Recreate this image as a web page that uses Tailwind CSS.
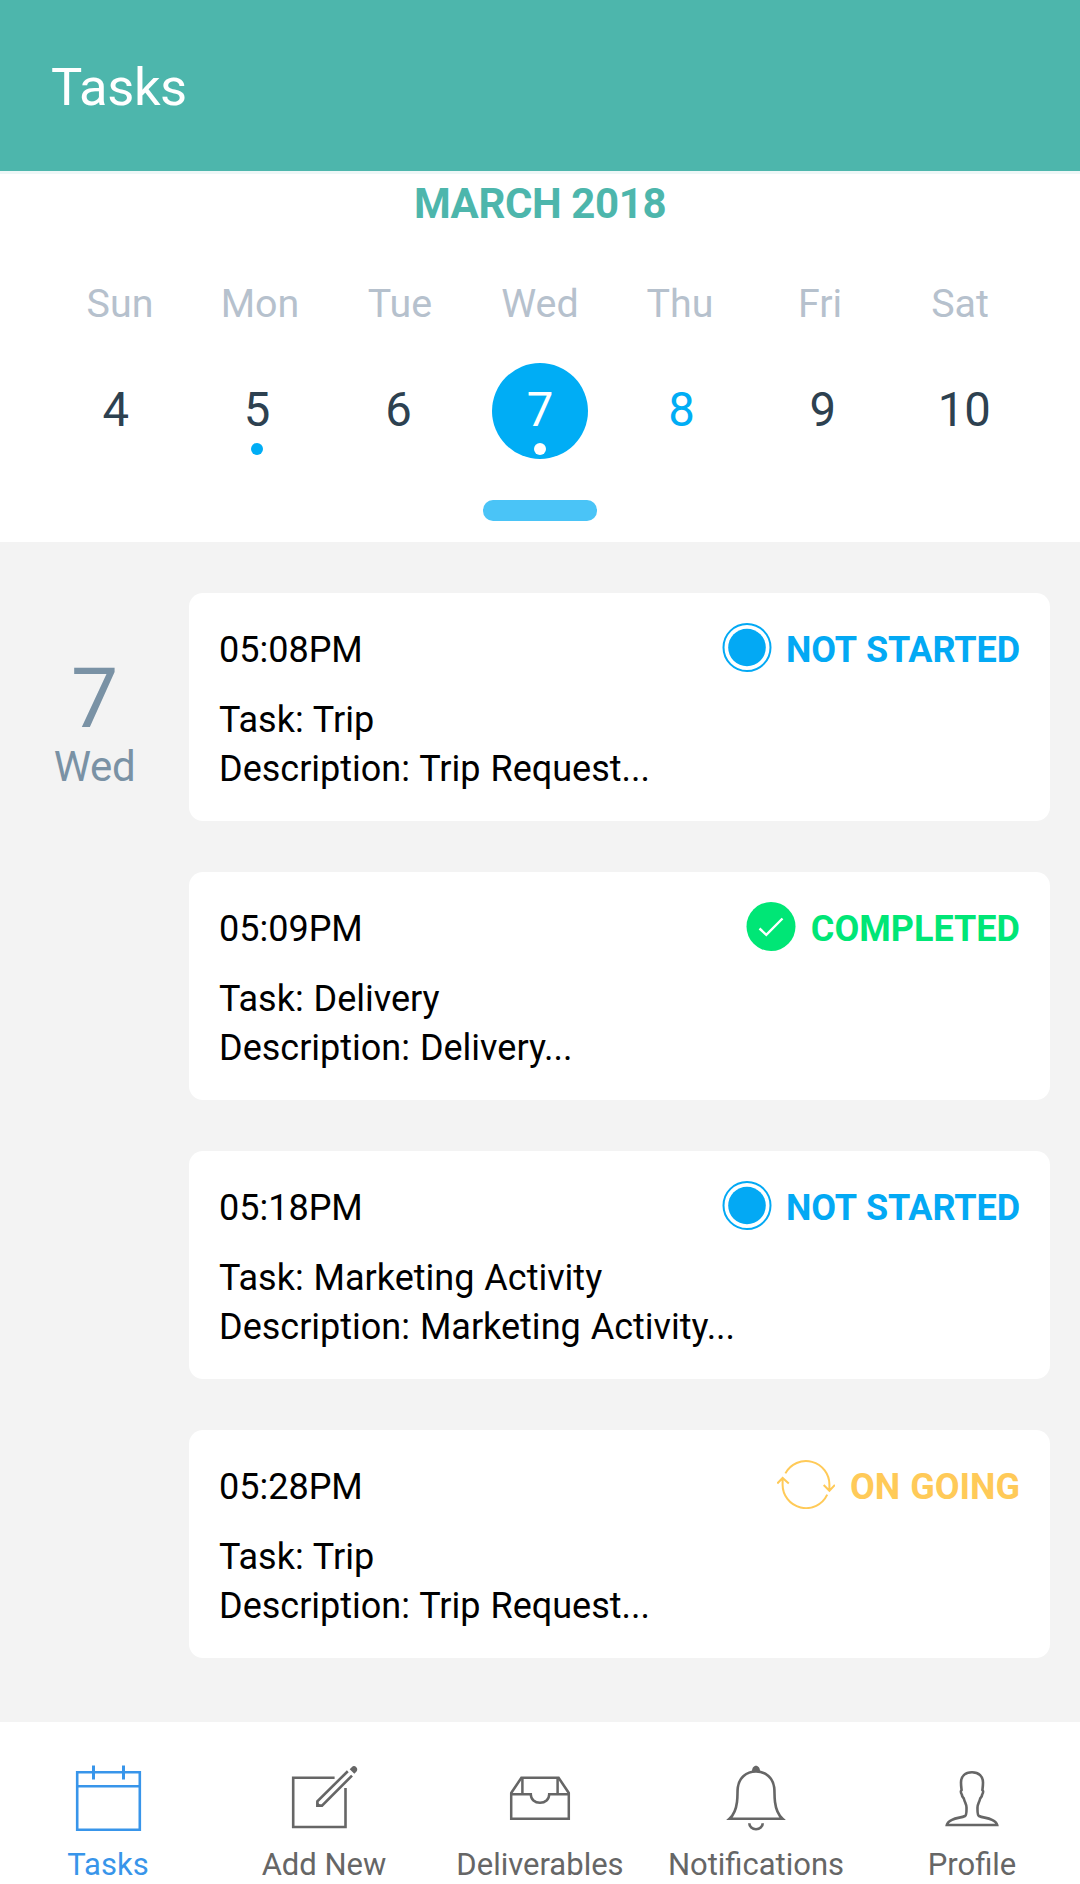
<!DOCTYPE html>
<html lang="en">
<head>
    <meta charset="UTF-8">
    <meta name="viewport" content="width=device-width, initial-scale=1.0">
    <title>Tasks</title>
    <script src="https://cdn.jsdelivr.net/npm/@tailwindcss/browser@4"></script>
</head>
<body class="bg-[#f3f3f3] font-['Roboto',sans-serif] w-[1080px] h-[1884px] flex flex-col overflow-hidden">
    <header class="bg-[#4db6ac] h-[171px] shrink-0 pt-[52px] pl-[51px]">
        <h1 class="text-white text-[52.5px] leading-[70px] tracking-[-0.4px]">Tasks</h1>
    </header>

    <!-- Week calendar -->
    <section class="bg-white h-[371px] shrink-0 border-t-3 border-[#eef7f7] flex flex-col">
        <h2 class="mt-[6px] text-center text-[#4db6ac] font-bold text-[42px] leading-[48px] tracking-[-0.4px]">MARCH 2018</h2>
        <div class="mt-[52px] mx-[50px] grid grid-cols-7 text-center text-[#b6c1cd] text-[39.4px] leading-[48px]">
            <span>Sun</span>
            <span>Mon</span>
            <span>Tue</span>
            <span>Wed</span>
            <span>Thu</span>
            <span>Fri</span>
            <span>Sat</span>
        </div>
        <div class="mt-[35px] mx-[45px] grid grid-cols-7 justify-items-center text-[#2d4150] text-[47.25px] leading-[48px]">
            <div class="size-24 pt-[23px] flex flex-col items-center">4</div>
            <div class="size-24 pt-[23px] flex flex-col items-center">5<span class="size-3 mt-[9px] rounded-full bg-[#00adf5]"></span></div>
            <div class="size-24 pt-[23px] flex flex-col items-center">6</div>
            <div class="size-24 pt-[23px] flex flex-col items-center rounded-full bg-[#00adf5] text-white">7<span class="size-3 mt-[9px] rounded-full bg-white"></span></div>
            <div class="size-24 pt-[23px] flex flex-col items-center text-[#00adf5]">8</div>
            <div class="size-24 pt-[23px] flex flex-col items-center">9</div>
            <div class="size-24 pt-[23px] flex flex-col items-center">10</div>
        </div>
        <div class="mt-[41px] mx-auto w-[114px] h-[21px] rounded-[10px] bg-[#4ac4f7]"></div>
    </section>

    <!-- Agenda -->
    <main class="flex h-[1180px] shrink-0 pt-[51px] pr-[30px]">
        <div class="w-[189px] pt-[61px] text-center text-[#7a92a5]">
            <div class="text-[84px] leading-[90px]">7</div>
            <div class="text-[42px] leading-[45px] tracking-[-0.3px]">Wed</div>
        </div>

        <div class="flex-1 flex flex-col gap-[51px] text-black text-[36px] leading-[49px] [word-spacing:1px]">
            <article class="h-[228px] bg-white rounded-[14px] px-[30px] pt-[30px]">
                <div class="flex justify-between items-center h-[49px]">
                    <span class="pt-[6px]">05:08PM</span>
                    <div class="flex items-center gap-[14px] text-[#03a9f4] font-bold tracking-[-0.1px]">
                        <svg class="w-[50px] h-[49px]" viewBox="0 0 50 49" fill="none">
                            <circle cx="25" cy="24.5" r="23.5" stroke="currentColor" stroke-width="2"/>
                            <circle cx="25" cy="24.5" r="18.8" fill="currentColor"/>
                        </svg>
                        <span class="pt-[6px]">NOT STARTED</span>
                    </div>
                </div>
                <div class="mt-[24px]">Task: Trip</div>
                <div>Description: Trip Request...</div>
            </article>

            <article class="h-[228px] bg-white rounded-[14px] px-[30px] pt-[30px]">
                <div class="flex justify-between items-center h-[49px]">
                    <span class="pt-[6px]">05:09PM</span>
                    <div class="flex items-center gap-[15px] text-[#00e676] font-bold">
                        <svg class="w-[50px] h-[49px]" viewBox="0 0 50 49" fill="none">
                            <circle cx="25" cy="24.5" r="24.5" fill="currentColor"/>
                            <path d="M13.5 26.5l6.8 6.3L36.5 16.5" stroke="#fff" stroke-width="2.4"/>
                        </svg>
                        <span class="pt-[6px]">COMPLETED</span>
                    </div>
                </div>
                <div class="mt-[24px]">Task: Delivery</div>
                <div>Description: Delivery...</div>
            </article>

            <article class="h-[228px] bg-white rounded-[14px] px-[30px] pt-[30px]">
                <div class="flex justify-between items-center h-[49px]">
                    <span class="pt-[6px]">05:18PM</span>
                    <div class="flex items-center gap-[14px] text-[#03a9f4] font-bold tracking-[-0.1px]">
                        <svg class="w-[50px] h-[49px]" viewBox="0 0 50 49" fill="none">
                            <circle cx="25" cy="24.5" r="23.5" stroke="currentColor" stroke-width="2"/>
                            <circle cx="25" cy="24.5" r="18.8" fill="currentColor"/>
                        </svg>
                        <span class="pt-[6px]">NOT STARTED</span>
                    </div>
                </div>
                <div class="mt-[24px]">Task: Marketing Activity</div>
                <div>Description: Marketing Activity...</div>
            </article>

            <article class="h-[228px] bg-white rounded-[14px] px-[30px] pt-[30px]">
                <div class="flex justify-between items-center h-[49px]">
                    <span class="pt-[6px]">05:28PM</span>
                    <div class="flex items-center gap-[15px] text-[#ffca58] font-bold">
                        <svg class="w-[58px] h-[49px]" viewBox="0 0 58 49" fill="none" stroke="currentColor" stroke-width="2">
                            <path d="M8.4 13.4A23.4 23.4 0 0 1 52.4 25V30.700M46.700 25l5.700 5.700 5.500-5.700"/>
                            <path d="M50.200 34.600A23.400 23.400 0 0 1 5.600 24V18M.3 23.500L5.600 18l6.200 5.500"/>
                        </svg>
                        <span class="pt-[6px]">ON GOING</span>
                    </div>
                </div>
                <div class="mt-[24px]">Task: Trip</div>
                <div>Description: Trip Request...</div>
            </article>
        </div>
    </main>

    <!-- Bottom tabs -->
    <nav class="h-[162px] shrink-0 bg-white pt-10 grid grid-cols-5 justify-items-center text-[#666666] text-[31px] leading-[40px]">
        <a class="flex flex-col items-center gap-[11px] text-[#3895ea]">
            <svg class="size-[72px]" viewBox="0 0 72 72" fill="none" stroke="currentColor" stroke-width="2.6">
                <path d="M5.2 10.2h62.6v57.6H5.200zM5.200 24.200h62.600"/>
                <path d="M21.500 3.500v14M51.500 3.500v14" stroke-width="3"/>
            </svg>
            Tasks
        </a>
        <a class="flex flex-col items-center gap-[11px]">
            <svg class="size-[72px]" viewBox="0 0 72 72" fill="none" stroke="currentColor" stroke-width="2.600">
                <path d="M46.600 15.800H5.200v49.200h52.300V26"/>
                <path d="M59.800 9.200L29.400 39.200v4.400h4.600l30-30"/>
                <path d="M28.300 39.200l5.800 5.600h-5.800z" fill="currentColor" stroke="none"/>
                <path d="M61.700 7.200l2-2c1.500-1.600 3.300-1.400 4.600 0 1.300 1.400 1.300 3.200 0 4.600l-2 2z" fill="currentColor" stroke="none"/>
            </svg>
            Add New
        </a>
        <a class="flex flex-col items-center gap-[11px]">
            <svg class="size-[72px]" viewBox="0 0 72 72" fill="none" stroke="currentColor" stroke-width="2.500">
                <path d="M7.200 31L17.400 15.700h37.200L64.800 31v25.800H7.200z"/>
                <path d="M7.200 32.300h19.600c0 5.200 4 8.400 9.200 8.400s9.200-3.200 9.200-8.400h19.600M18.400 15.700v16.600M53.600 15.700v16.600"/>
            </svg>
            Deliverables
        </a>
        <a class="flex flex-col items-center gap-[11px]">
            <svg class="size-[72px]" viewBox="0 0 72 72" fill="none" stroke="currentColor" stroke-width="2.600">
                <path d="M36 9.500c-10 0-17 6.500-18.200 16-.6 4.500 0 9-.8 14.500-1 8-2.800 12.500-7.500 16.800h53c-4.700-4.300-6.500-8.800-7.500-16.800-.8-5.500-.2-10-.8-14.500C53 16 46 9.500 36 9.500z"/>
                <path d="M32 9c0-3 1.700-5.300 4-5.300S40 6 40 9z" fill="currentColor" stroke="none"/>
                <path d="M29.300 61.200c0 3.500 3 6 6.700 6s6.700-2.500 6.700-6"/>
            </svg>
            Notifications
        </a>
        <a class="flex flex-col items-center gap-[11px]">
            <svg class="size-[72px]" viewBox="0 0 72 72" fill="none" stroke="currentColor" stroke-width="2.600">
                <path d="M36 10.200c-7 0-11 4.300-11 10.300 0 3 .3 5 .6 7.500-1 .8-.6 3 .2 4.500.2 2 1 3 2 4 1.200 4.500 2.700 5.500 2.700 9 0 3.500.3 7.500-1.500 8.500-3.500 1.800-8.500 1.500-13 3.800-3 1.500-4.800 3-5.200 5.200h50.400c-.4-2.200-2.200-3.700-5.200-5.200-4.500-2.300-9.500-2-13-3.800-1.800-1-1.500-5-1.500-8.500 0-3.500 1.500-4.500 2.700-9 1-1 1.800-2 2-4 .8-1.500 1.200-3.700.2-4.500.3-2.500.6-4.500.6-7.500 0-6-4-10.300-11-10.300z"/>
            </svg>
            Profile
        </a>
    </nav>
</body>
</html>
